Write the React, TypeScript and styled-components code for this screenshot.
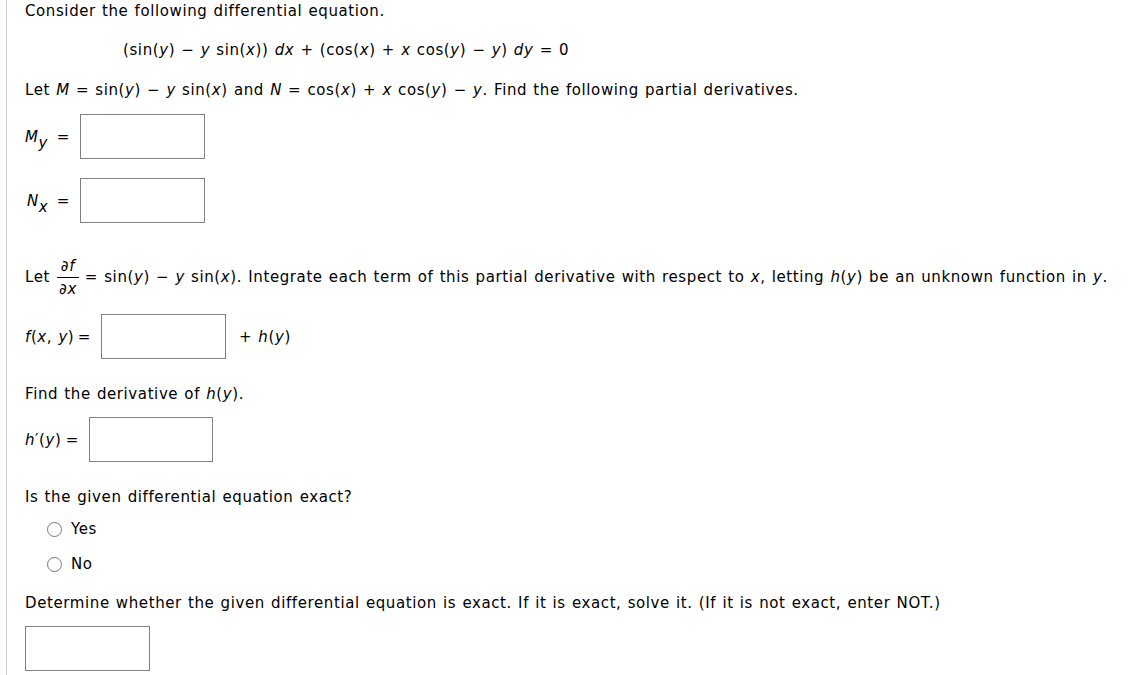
import React from "react";
import styled, { createGlobalStyle } from "styled-components";

const Global = createGlobalStyle`
  html, body { margin: 0; padding: 0; background: #fff; }
  body { font-family: "DejaVu Sans", Verdana, sans-serif; font-size: 15px; letter-spacing: 0.6px; word-spacing: 0.8px; color: #000; }
`;

const Page = styled.div`
  margin-left: 6px;
  border-left: 1px solid #d3d3d3;
  padding-left: 18px;
  min-height: 675px;
  box-sizing: border-box;
  padding-top: 1px;
`;

const Line = styled.div<{ $mt?: number; $ml?: number }>`
  line-height: 20px;
  height: 20px;
  white-space: nowrap;
  margin-top: ${(p) => p.$mt ?? 0}px;
  margin-left: ${(p) => p.$ml ?? 0}px;
`;

const V = styled.i`
  font-style: oblique;
`;

const Row = styled.div<{ $mt?: number }>`
  display: flex;
  align-items: center;
  margin-top: ${(p) => p.$mt ?? 0}px;
  white-space: nowrap;
`;

const TextRow = styled.div<{ $mt?: number }>`
  margin-top: ${(p) => p.$mt ?? 0}px;
  white-space: nowrap;
  line-height: 20px;
`;

const Label = styled.div<{ $w: number; $pl?: number }>`
  width: ${(p) => p.$w}px;
  padding-left: ${(p) => p.$pl ?? 0}px;
  box-sizing: border-box;
  display: flex;
  align-items: center;
  justify-content: space-between;
  padding-right: 10px;
`;

const Sub = styled.sub`
  font-size: 15px;
  vertical-align: -6px;
  line-height: 0;
`;

const Box = styled.div<{ $w?: number }>`
  width: ${(p) => p.$w ?? 125}px;
  height: 45px;
  border: 1px solid #808080;
  box-sizing: border-box;
  background: #fff;
`;

const Frac = styled.span`
  display: inline-flex;
  flex-direction: column;
  align-items: center;
  vertical-align: middle;
  margin: 0 6px 0 7px;
`;

const Num = styled.span`
  line-height: 22px;
  padding: 0 2px;
`;

const Bar = styled.span`
  align-self: stretch;
  height: 1px;
  background: #000;
`;

const Den = styled.span`
  line-height: 22px;
  padding: 0 2px;
`;

const After = styled.span`
  margin-left: 13px;
`;

const Radio = styled.div<{ $mt?: number }>`
  display: flex;
  align-items: center;
  margin-top: ${(p) => p.$mt ?? 0}px;
  margin-left: 22px;
  line-height: 20px;
  height: 20px;
`;

const Circle = styled.span`
  width: 15px;
  height: 15px;
  border: 1px solid #767676;
  border-radius: 50%;
  box-sizing: border-box;
  margin-right: 9px;
`;

export default function App() {
  return (
    <>
      <Global />
      <Page>
        <Line>Consider the following differential equation.</Line>
        <Line $mt={19} $ml={98}>
          (sin(<V>y</V>) − <V>y</V> sin(<V>x</V>)) <V>dx</V> + (cos(<V>x</V>) + <V>x</V> cos(<V>y</V>) − <V>y</V>) <V>dy</V> = 0
        </Line>
        <Line $mt={20}>
          Let <V>M</V> = sin(<V>y</V>) − <V>y</V> sin(<V>x</V>) and <V>N</V> = cos(<V>x</V>) + <V>x</V> cos(<V>y</V>) − <V>y</V>. Find the following partial derivatives.
        </Line>
        <Row $mt={14}>
          <Label $w={55}>
            <span>
              <V>M</V>
              <Sub>
                <V>y</V>
              </Sub>
            </span>
            <span>=</span>
          </Label>
          <Box />
        </Row>
        <Row $mt={19}>
          <Label $w={55} $pl={2}>
            <span>
              <V>N</V>
              <Sub>
                <V>x</V>
              </Sub>
            </span>
            <span>=</span>
          </Label>
          <Box />
        </Row>
        <TextRow $mt={32}>
          Let
          <Frac>
            <Num>
              <V>∂f</V>
            </Num>
            <Bar />
            <Den>
              ∂<V>x</V>
            </Den>
          </Frac>
          = sin(<V>y</V>) − <V>y</V> sin(<V>x</V>). Integrate each term of this partial derivative with respect to <V>x</V>, letting <V>h</V>(<V>y</V>) be an unknown function in <V>y</V>.
        </TextRow>
        <Row $mt={14}>
          <Label $w={76}>
            <span>
              <V>f</V>(<V>x</V>, <V>y</V>)
            </span>
            <span>=</span>
          </Label>
          <Box />
          <After>
            + <V>h</V>(<V>y</V>)
          </After>
        </Row>
        <Line $mt={25}>
          Find the derivative of <V>h</V>(<V>y</V>).
        </Line>
        <Row $mt={13}>
          <Label $w={64}>
            <span>
              <V>h</V>′(<V>y</V>)
            </span>
            <span>=</span>
          </Label>
          <Box $w={124} />
        </Row>
        <Line $mt={25}>Is the given differential equation exact?</Line>
        <Radio $mt={12}>
          <Circle />
          Yes
        </Radio>
        <Radio $mt={15}>
          <Circle />
          No
        </Radio>
        <Line $mt={19}>
          Determine whether the given differential equation is exact. If it is exact, solve it. (If it is not exact, enter NOT.)
        </Line>
        <Row $mt={13}>
          <Box />
        </Row>
      </Page>
    </>
  );
}
